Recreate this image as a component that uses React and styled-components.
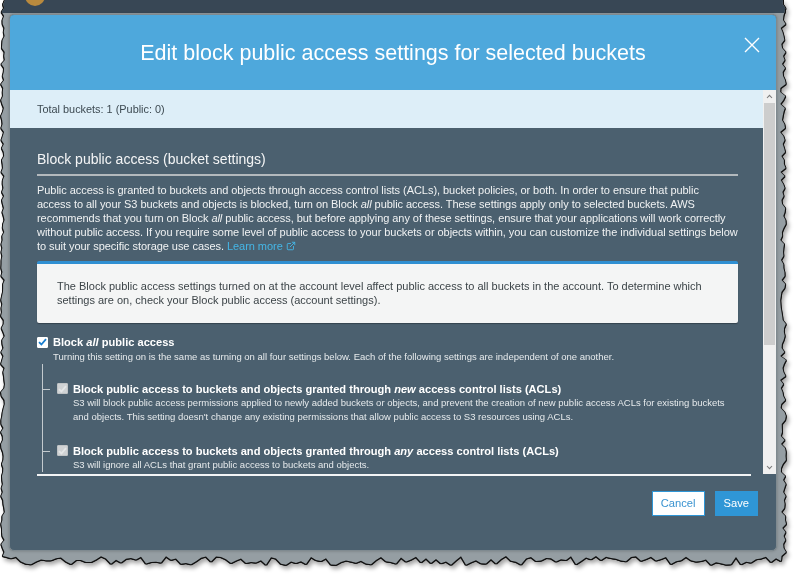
import React from "react";
import styled, { createGlobalStyle } from "styled-components";
import { ExternalLink } from "lucide-react";

const GlobalStyle = createGlobalStyle`
  html, body {
    margin: 0;
    padding: 0;
    background: #ffffff;
  }
  body {
    font-family: "Liberation Sans", Arial, sans-serif;
  }
`;

// torn paper edge for the screenshot frame
const FRAME_W = 786;
const FRAME_H = 566;

function tornPolygon() {
  let seed = 7;
  const rand = () => {
    seed = (seed * 9301 + 49297) % 233280;
    return seed / 233280;
  };
  const pts = [];
  pts.push(`${3 + rand() * 2}px 0px`);
  pts.push(`${FRAME_W - 4}px 0px`);
  for (let y = 4; y < FRAME_H - 8; y += 4) {
    pts.push(`${FRAME_W - 1 - rand() * 6}px ${y}px`);
  }
  for (let x = FRAME_W - 6; x > 4; x -= 5) {
    pts.push(`${x}px ${FRAME_H - 1 - rand() * 9}px`);
  }
  for (let y = FRAME_H - 10; y > 0; y -= 4) {
    pts.push(`${rand() * 4}px ${y}px`);
  }
  return `polygon(${pts.join(", ")})`;
}

const TORN = tornPolygon();

const Page = styled.div`
  width: 800px;
  height: 581px;
  overflow: hidden;
`;

const Shadow = styled.div`
  margin-left: 1px;
  width: ${FRAME_W}px;
  filter: drop-shadow(1px 0 0 #111) drop-shadow(-1px 0 0 #111)
    drop-shadow(0 1px 0 #111) drop-shadow(2px 3px 2px rgba(0, 0, 0, 0.35));
`;

const Frame = styled.div`
  width: ${FRAME_W}px;
  height: ${FRAME_H}px;
  background: #959ea3;
  clip-path: ${TORN};
  display: flex;
  flex-direction: column;
`;

const NavStrip = styled.div`
  height: 13px;
  flex: none;
  background: #384755;
  display: flex;
`;

const Logo = styled.div`
  margin: -14px 0 0 24px;
  width: 20px;
  height: 20px;
  border-radius: 50%;
  background: #b98a3e;
`;

const Modal = styled.div`
  position: relative;
  margin: 1px 0 0 8px;
  width: 766px;
  border: 1px solid #7f8a90;
  border-radius: 5px;
  overflow: hidden;
  background: #4b606f;
  display: flex;
  flex-direction: column;
  box-shadow: 0 0 3px rgba(0, 0, 0, 0.25);
`;

const Header = styled.header`
  height: 75px;
  background: #4ea8dc;
  display: flex;
  align-items: center;
  justify-content: center;
`;

const Title = styled.h2`
  margin: 2px 0 0;
  font-size: 21.5px;
  font-weight: 400;
  color: #ffffff;
`;

const CloseButton = styled.button`
  position: absolute;
  top: 21px;
  right: 15px;
  width: 18px;
  height: 18px;
  padding: 0;
  border: 0;
  background: none;
  display: flex;
`;

const Body = styled.div`
  height: 384px;
  display: flex;
`;

const Scroller = styled.div`
  flex: 1;
  overflow: hidden;
`;

const Banner = styled.div`
  height: 38px;
  background: #ddeef8;
  display: flex;
  align-items: center;
  padding-left: 27px;
  font-size: 10.9px;
  color: #3d4a52;
`;

const Section = styled.section`
  padding: 0 25px 0 27px;
  color: #f0f2f3;
`;

const SectionTitle = styled.h3`
  margin: 22px 0 0;
  padding-bottom: 6px;
  border-bottom: 2px solid #b3b9bd;
  font-size: 14px;
  line-height: 18px;
  font-weight: 400;
  color: #f4f5f6;
`;

const Intro = styled.p`
  margin: 7px 0 0;
  font-size: 11px;
  line-height: 14px;
  letter-spacing: -0.05px;
  white-space: nowrap;
`;

const LearnMore = styled.a`
  color: #45b6e6;
  text-decoration: none;
  display: inline-flex;
  align-items: center;
  gap: 3px;
`;

const Notice = styled.div`
  margin-top: 8px;
  border-top: 3px solid #2f8fd2;
  border-radius: 2px;
  background: #f4f5f5;
  padding: 15px 20px 16px;
  font-size: 11px;
  line-height: 14px;
  color: #3c4448;
  white-space: nowrap;
  box-shadow: 0 1px 1px rgba(0, 0, 0, 0.3);
`;

const Option = styled.div`
  margin-top: 12px;
`;

const CheckRow = styled.div`
  display: flex;
  align-items: center;
  gap: 5px;
  height: 14px;
`;

const Box = styled.span`
  width: 11px;
  height: 11px;
  flex: none;
  box-sizing: border-box;
  border-radius: 1px;
  background: ${(p) => (p.$disabled ? "#cfd2d4" : "#ffffff")};
  border: 1px solid ${(p) => (p.$disabled ? "#bfc3c5" : "#ffffff")};
  display: flex;
  align-items: center;
  justify-content: center;
`;

const Label = styled.span`
  font-size: 11.1px;
  font-weight: 700;
  color: #ffffff;
`;

const Hint = styled.div`
  margin: 1px 0 0 16px;
  font-size: 9.5px;
  line-height: 14px;
  color: #e6eaec;
`;

const SubList = styled.div`
  margin-left: 5px;
  border-left: 1px solid #c3cace;
`;

const SubItem = styled.div`
  display: flex;
  align-items: flex-start;
  padding-top: ${(p) => (p.$first ? 18 : 20)}px;
`;

const Tick = styled.span`
  flex: none;
  width: 7px;
  height: 1px;
  margin: 7px 7px 0 0;
  background: #c3cace;
`;

const SubBox = styled(Box)`
  margin: 1px 5px 0 0;
`;

const SubText = styled.div`
  display: flex;
  flex-direction: column;
`;

const SubLabel = styled.span`
  font-size: 11.1px;
  line-height: 14px;
  font-weight: 700;
  color: #ffffff;
`;

const SubDesc = styled.span`
  font-size: 9.5px;
  line-height: 14px;
  color: #e6eaec;
  white-space: nowrap;
`;

const Scrollbar = styled.div`
  width: 13px;
  background: #f0f0f0;
  display: flex;
  flex-direction: column;
`;

const Arrow = styled.div`
  height: 13px;
  flex: none;
  display: flex;
  align-items: center;
  justify-content: center;
`;

const Thumb = styled.div`
  margin: 0 1px;
  height: 242px;
  background: #cdcdcd;
`;

const Track = styled.div`
  flex: 1;
`;

const Footer = styled.footer`
  height: 76px;
  display: flex;
  flex-direction: column;
`;

const Rule = styled.div`
  margin: 0 25px 0 27px;
  height: 1.5px;
  background: #f2f4f5;
`;

const Actions = styled.div`
  display: flex;
  justify-content: flex-end;
  gap: 10px;
  padding: 15px 18px 0 0;
`;

const Button = styled.button`
  height: 25px;
  padding: 0 8px;
  font-family: "Liberation Sans", Arial, sans-serif;
  font-size: 11.2px;
  border: 1px solid #2f96d6;
  background: ${(p) => (p.$primary ? "#2f96d6" : "#ffffff")};
  color: ${(p) => (p.$primary ? "#ffffff" : "#3a93d0")};
`;

const Check = ({ color }) => (
  <svg width="9" height="8" viewBox="0 0 9 8">
    <path d="M1 4.2 L3.4 6.5 L8 1.2" fill="none" stroke={color} strokeWidth="1.8" />
  </svg>
);

const Chevron = ({ up }) => (
  <svg width="7" height="5" viewBox="0 0 7 5">
    <path
      d={up ? "M1 4 L3.5 1.3 L6 4" : "M1 1 L3.5 3.7 L6 1"}
      fill="none"
      stroke="#7a7a7a"
      strokeWidth="1.1"
    />
  </svg>
);

const subOptions = [
  {
    label: (
      <>
        Block public access to buckets and objects granted through <i>new</i> access control
        lists (ACLs)
      </>
    ),
    desc: [
      "S3 will block public access permissions applied to newly added buckets or objects, and prevent the creation of new public access ACLs for existing buckets",
      "and objects. This setting doesn't change any existing permissions that allow public access to S3 resources using ACLs.",
    ],
  },
  {
    label: (
      <>
        Block public access to buckets and objects granted through <i>any</i> access control
        lists (ACLs)
      </>
    ),
    desc: ["S3 will ignore all ACLs that grant public access to buckets and objects."],
  },
];

export default function App() {
  return (
    <Page>
      <GlobalStyle />
      <Shadow>
        <Frame>
          <NavStrip>
            <Logo />
          </NavStrip>
          <Modal>
            <Header>
              <Title>Edit block public access settings for selected buckets</Title>
              <CloseButton aria-label="Close">
                <svg width="18" height="18" viewBox="0 0 18 18">
                  <path d="M2 2 L16 16 M16 2 L2 16" stroke="#ffffff" strokeWidth="1.4" />
                </svg>
              </CloseButton>
            </Header>
            <Body>
              <Scroller>
                <Banner>Total buckets: 1 (Public: 0)</Banner>
                <Section>
                  <SectionTitle>Block public access (bucket settings)</SectionTitle>
                  <Intro>
                    Public access is granted to buckets and objects through access control lists
                    (ACLs), bucket policies, or both. In order to ensure that public
                    <br />
                    access to all your S3 buckets and objects is blocked, turn on Block <i>all</i>{" "}
                    public access. These settings apply only to selected buckets. AWS
                    <br />
                    recommends that you turn on Block <i>all</i> public access, but before applying
                    any of these settings, ensure that your applications will work correctly
                    <br />
                    without public access. If you require some level of public access to your
                    buckets or objects within, you can customize the individual settings below
                    <br />
                    to suit your specific storage use cases.{" "}
                    <LearnMore href="#">
                      Learn more <ExternalLink size={10} strokeWidth={2.2} />
                    </LearnMore>
                  </Intro>
                  <Notice>
                    The Block public access settings turned on at the account level affect public
                    access to all buckets in the account. To determine which
                    <br />
                    settings are on, check your Block public access (account settings).
                  </Notice>
                  <Option>
                    <CheckRow>
                      <Box>
                        <Check color="#1a7fd0" />
                      </Box>
                      <Label>
                        Block <i>all</i> public access
                      </Label>
                    </CheckRow>
                    <Hint>
                      Turning this setting on is the same as turning on all four settings below.
                      Each of the following settings are independent of one another.
                    </Hint>
                    <SubList>
                      {subOptions.map((o, i) => (
                        <SubItem key={i} $first={i === 0}>
                          <Tick />
                          <SubBox $disabled>
                            <Check color="#e4e6e7" />
                          </SubBox>
                          <SubText>
                            <SubLabel>{o.label}</SubLabel>
                            {o.desc.map((d) => (
                              <SubDesc key={d}>{d}</SubDesc>
                            ))}
                          </SubText>
                        </SubItem>
                      ))}
                    </SubList>
                  </Option>
                </Section>
              </Scroller>
              <Scrollbar>
                <Arrow>
                  <Chevron up />
                </Arrow>
                <Thumb />
                <Track />
                <Arrow>
                  <Chevron />
                </Arrow>
              </Scrollbar>
            </Body>
            <Footer>
              <Rule />
              <Actions>
                <Button>Cancel</Button>
                <Button $primary>Save</Button>
              </Actions>
            </Footer>
          </Modal>
        </Frame>
      </Shadow>
    </Page>
  );
}
